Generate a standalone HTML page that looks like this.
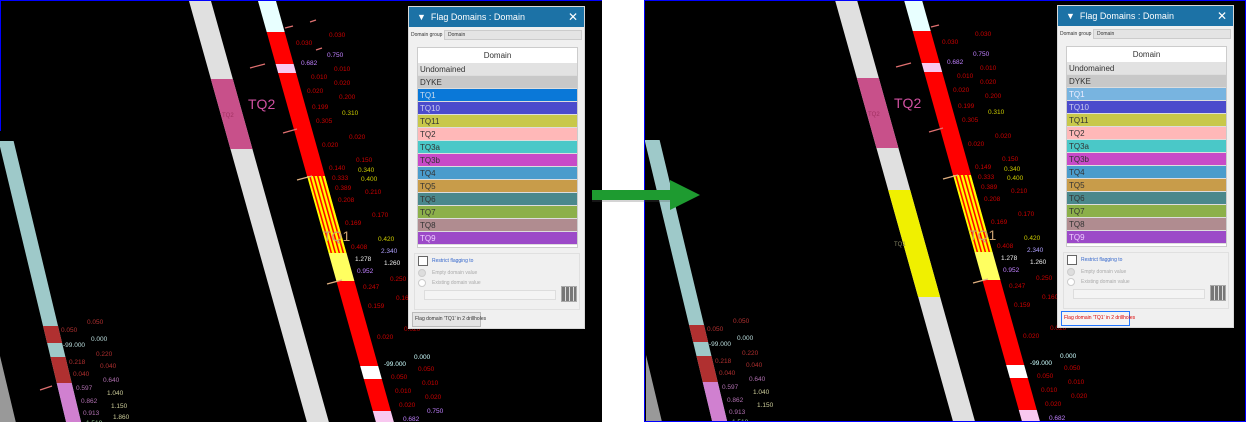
<!DOCTYPE html>
<html><head><meta charset="utf-8"><style>
*{margin:0;padding:0;box-sizing:border-box}
body{width:1246px;height:422px;background:#fff;position:relative;overflow:hidden;font-family:"Liberation Sans",sans-serif}
.panel{position:absolute;top:0;height:422px;background:#000;overflow:hidden}
.dlg{position:absolute;top:5px;width:177px;height:323px;background:#f0f0f0;border:1px solid #d8d8d8;font-size:6px;color:#333}
.tb{height:20px;background:#1c72a6;color:#fff;font-size:9px;line-height:20px;padding-left:8px;position:relative}
.tb .x{position:absolute;right:6px;top:0;font-size:12px}
.dg{position:absolute;top:23px;left:2px;right:2px;height:10px;font-size:5px;line-height:10px}
.dg span.sel{position:absolute;left:33px;right:0;top:0;height:10px;background:#e4e4e4;border:1px solid #ccc;padding-left:3px;line-height:8px}
.tbl{position:absolute;left:8px;top:40px;width:161px;height:201px;background:#fff;border:1px solid #ccc}
.tbl .h{height:15px;text-align:center;font-size:8px;line-height:15px;color:#333}
.tbl .r{height:13px;font-size:8px;line-height:13px;padding-left:2px;border-bottom:1px solid #ddd}
.grp{position:absolute;left:5px;top:246px;width:166px;height:57px;border:1px solid #e0e0e0}
.cb{position:absolute;left:3px;top:2px;width:10px;height:10px;border:1px solid #666;background:#fff}
.rd{position:absolute;left:3px;width:8px;height:8px;border-radius:50%;border:1px solid #ccc;background:#fff}
.fld{position:absolute;left:9px;top:36px;width:132px;height:10px;border:1px solid #ddd;background:#f4f4f4}
.gi{position:absolute;left:146px;top:32px;width:16px;height:16px;border:1px solid #aaa;background:repeating-linear-gradient(90deg,#777 0 3px,#ddd 3px 4px)}
.btn{position:absolute;left:3px;top:305px;width:69px;height:15px;border:1px solid #bbb;background:#e4e4e4;font-size:5px;line-height:13px;padding-left:2px;white-space:nowrap}
svg text{font-family:"Liberation Sans",sans-serif}
</style></head><body>

<!-- LEFT PANEL -->
<div class="panel" style="left:0;width:602px;border-top:1px solid #00f">
<svg width="602" height="422" style="position:absolute;left:0;top:0">
<defs><pattern id="hp" width="4" height="4" patternUnits="userSpaceOnUse"><rect width="4" height="4" fill="#ff0"/><rect width="1.6" height="4" fill="#f00"/></pattern></defs>
<polygon points="0,355 0,422 16,422" fill="#999"/>
<rect x="0" y="0" width="1" height="130" fill="#00f"/>
<g transform="skewX(13.5)">
<rect x="-35" y="140" width="15" height="282" fill="#9ec9c9"/>
<rect x="-35" y="325" width="15" height="17" fill="#b03030"/>
<rect x="-35" y="356" width="15" height="26" fill="#b03030"/>
<rect x="-35" y="382" width="15" height="40" fill="#d080d0"/>
</g>
<g transform="skewX(15.64)">
<rect x="189" y="0" width="22" height="422" fill="#e0e0e0"/>
<rect x="189" y="78" width="22" height="70" fill="#c8508a"/>
<rect x="258" y="0" width="18" height="31" fill="#e8ffff"/>
<rect x="258" y="31" width="18" height="32" fill="#f00"/>
<rect x="258" y="63" width="18" height="9" fill="#f8c8f0"/>
<rect x="258" y="72" width="18" height="103" fill="#f00"/>
<rect x="258" y="175" width="18" height="77" fill="url(#hp)"/>
<rect x="258" y="252" width="18" height="28" fill="#ffff60"/>
<rect x="258" y="280" width="18" height="85" fill="#f00"/>
<rect x="258" y="365" width="18" height="13" fill="#fff"/>
<rect x="258" y="378" width="18" height="32" fill="#f00"/>
<rect x="258" y="410" width="18" height="12" fill="#f8c8f0"/>
</g>
<g font-size="6.5" fill="#c00">
<text x="222" y="116" fill="#a03060" font-size="6">TQ2</text>
<text x="248" y="108" fill="#d050a0" font-size="14">TQ2</text>
<text x="323" y="240" fill="#c8a070" font-size="14">TQ1</text>
<g transform="translate(6,0)">
<text x="290" y="44">0.030</text><text x="323" y="36">0.030</text>
<text x="295" y="64" fill="#c080ff">0.682</text><text x="321" y="56" fill="#c080ff">0.750</text>
<text x="305" y="78">0.010</text><text x="328" y="70">0.010</text>
<text x="301" y="92">0.020</text><text x="328" y="84">0.020</text>
<text x="306" y="108">0.199</text><text x="333" y="98">0.200</text>
<text x="310" y="122">0.305</text><text x="336" y="114" fill="#cc0">0.310</text>
<text x="316" y="146">0.020</text><text x="343" y="138">0.020</text>
<text x="323" y="169">0.140</text><text x="350" y="161">0.150</text>
<text x="326" y="179">0.333</text><text x="352" y="171" fill="#cc0">0.340</text>
<text x="329" y="189">0.389</text><text x="355" y="180" fill="#cc0">0.400</text>
<text x="332" y="201">0.208</text><text x="359" y="193">0.210</text>
<text x="339" y="224">0.169</text><text x="366" y="216">0.170</text>
<text x="345" y="248">0.408</text><text x="372" y="240" fill="#cc0">0.420</text>
<text x="349" y="260" fill="#eee">1.278</text><text x="375" y="252" fill="#b0a0ff">2.340</text>
<text x="351" y="272" fill="#c080ff">0.952</text><text x="378" y="264" fill="#eee">1.260</text>
<text x="357" y="288">0.247</text><text x="384" y="280">0.250</text>
<text x="362" y="307">0.159</text><text x="390" y="299">0.160</text>
<text x="371" y="338">0.020</text><text x="398" y="330">0.020</text>
<text x="378" y="365" fill="#cff">-99.000</text><text x="408" y="358" fill="#cff">0.000</text>
<text x="385" y="378">0.050</text><text x="412" y="370">0.050</text>
<text x="389" y="392">0.010</text><text x="416" y="384">0.010</text>
<text x="393" y="406">0.020</text><text x="419" y="398">0.020</text>
<text x="397" y="420" fill="#c080ff">0.682</text><text x="421" y="412" fill="#c080ff">0.750</text>
</g>
<g fill="#b03030" transform="translate(3,0)">
<text x="58" y="331">0.050</text><text x="84" y="323">0.050</text>
<text x="60" y="346" fill="#bdd">-99.000</text><text x="88" y="340" fill="#bdd">0.000</text>
<text x="66" y="363">0.218</text><text x="93" y="355">0.220</text>
<text x="70" y="375">0.040</text><text x="97" y="367">0.040</text>
<text x="73" y="389" fill="#b070b0">0.597</text><text x="100" y="381" fill="#b070b0">0.640</text>
<text x="78" y="402" fill="#b070b0">0.862</text><text x="104" y="394" fill="#cc9">1.040</text>
<text x="80" y="414" fill="#b070b0">0.913</text><text x="108" y="407" fill="#cc9">1.150</text>
<text x="83" y="424" fill="#9c9">1.518</text><text x="110" y="418" fill="#cc9">1.860</text>
</g>
</g>
<g stroke="#e07070" stroke-width="1.2">
<line x1="285" y1="27" x2="293" y2="25"/><line x1="310" y1="21" x2="316" y2="19"/>
<line x1="250" y1="67" x2="265" y2="63"/><line x1="316" y1="49" x2="322" y2="47"/>
<line x1="283" y1="132" x2="297" y2="128"/>
<line x1="297" y1="179" x2="312" y2="175" stroke="#e0b080"/>
<line x1="327" y1="283" x2="342" y2="279" stroke="#e0b080"/>
<line x1="40" y1="389" x2="52" y2="385"/>
</g>
</svg>
<div class="dlg" style="left:408px">
<div class="tb">▼&nbsp; Flag Domains : Domain<span class="x">✕</span></div>
<div class="dg">Domain group<span class="sel">Domain</span></div>
<div class="tbl">
<div class="h">Domain</div>
<div class="r" style="background:#e2e2e2">Undomained</div>
<div class="r" style="background:#c8c8c8">DYKE</div>
<div class="r" style="background:#0a78d8;color:#cde">TQ1</div>
<div class="r" style="background:#4b4bcc;color:#cce">TQ10</div>
<div class="r" style="background:#c8c84a">TQ11</div>
<div class="r" style="background:#ffb8b8">TQ2</div>
<div class="r" style="background:#4ac8c8">TQ3a</div>
<div class="r" style="background:#c84ac8">TQ3b</div>
<div class="r" style="background:#4a9ccc">TQ4</div>
<div class="r" style="background:#c89c4a">TQ5</div>
<div class="r" style="background:#4a888c">TQ6</div>
<div class="r" style="background:#8cb04a">TQ7</div>
<div class="r" style="background:#b08c90">TQ8</div>
<div class="r" style="background:#9c4ac8;color:#ecf">TQ9</div>
</div>
<div class="grp"><div class="cb"></div><span style="position:absolute;left:17px;top:4px;color:#36c;font-size:5px">Restrict flagging to</span>
<div class="rd" style="top:15px;background:#ddd"></div><span style="position:absolute;left:17px;top:16px;color:#aaa;font-size:5px">Empty domain value</span>
<div class="rd" style="top:25px"></div><span style="position:absolute;left:17px;top:26px;color:#aaa;font-size:5px">Existing domain value</span>
<div class="fld"></div><div class="gi"></div></div>
<div class="btn">Flag domain 'TQ1' in 2 drillholes</div>
</div>
</div>

<!-- RIGHT PANEL -->
<div class="panel" style="left:644px;width:602px;border:1px solid #00f">
<svg width="602" height="422" style="position:absolute;left:-645px;top:-1px;overflow:visible">
<defs><pattern id="hp2" width="4" height="4" patternUnits="userSpaceOnUse"><rect width="4" height="4" fill="#ff0"/><rect width="1.6" height="4" fill="#f00"/></pattern></defs>
<g transform="translate(646,0)">
<polygon points="0,355 0,422 16,422" fill="#999"/>
<g transform="skewX(13.5)">
<rect x="-35" y="140" width="15" height="282" fill="#9ec9c9"/>
<rect x="-35" y="325" width="15" height="17" fill="#b03030"/>
<rect x="-35" y="356" width="15" height="26" fill="#b03030"/>
<rect x="-35" y="382" width="15" height="40" fill="#d080d0"/>
</g>
<g transform="skewX(15.64)">
<rect x="189" y="0" width="22" height="422" fill="#e0e0e0"/>
<rect x="189" y="78" width="22" height="70" fill="#c8508a"/>
<rect x="189" y="190" width="22" height="107" fill="#f0f000"/>
<rect x="258" y="0" width="18" height="31" fill="#e8ffff"/>
<rect x="258" y="31" width="18" height="32" fill="#f00"/>
<rect x="258" y="63" width="18" height="9" fill="#f8c8f0"/>
<rect x="258" y="72" width="18" height="103" fill="#f00"/>
<rect x="258" y="175" width="18" height="77" fill="url(#hp2)"/>
<rect x="258" y="252" width="18" height="28" fill="#ffff60"/>
<rect x="258" y="280" width="18" height="85" fill="#f00"/>
<rect x="258" y="365" width="18" height="13" fill="#fff"/>
<rect x="258" y="378" width="18" height="32" fill="#f00"/>
<rect x="258" y="410" width="18" height="12" fill="#f8c8f0"/>
</g>
<g font-size="6.5" fill="#c00">
<text x="222" y="116" fill="#a03060" font-size="6">TQ2</text>
<text x="248" y="108" fill="#d050a0" font-size="14">TQ2</text>
<text x="248" y="246" fill="#886" font-size="6">TQ1</text>
<text x="323" y="240" fill="#c8a070" font-size="14">TQ1</text>
<g transform="translate(6,0)">
<text x="290" y="44">0.030</text><text x="323" y="36">0.030</text>
<text x="295" y="64" fill="#c080ff">0.682</text><text x="321" y="56" fill="#c080ff">0.750</text>
<text x="305" y="78">0.010</text><text x="328" y="70">0.010</text>
<text x="301" y="92">0.020</text><text x="328" y="84">0.020</text>
<text x="306" y="108">0.199</text><text x="333" y="98">0.200</text>
<text x="310" y="122">0.305</text><text x="336" y="114" fill="#cc0">0.310</text>
<text x="316" y="146">0.020</text><text x="343" y="138">0.020</text>
<text x="323" y="169">0.149</text><text x="350" y="161">0.150</text>
<text x="326" y="179">0.333</text><text x="352" y="171" fill="#cc0">0.340</text>
<text x="329" y="189">0.389</text><text x="355" y="180" fill="#cc0">0.400</text>
<text x="332" y="201">0.208</text><text x="359" y="193">0.210</text>
<text x="339" y="224">0.169</text><text x="366" y="216">0.170</text>
<text x="345" y="248">0.408</text><text x="372" y="240" fill="#cc0">0.420</text>
<text x="349" y="260" fill="#eee">1.278</text><text x="375" y="252" fill="#b0a0ff">2.340</text>
<text x="351" y="272" fill="#c080ff">0.952</text><text x="378" y="264" fill="#eee">1.260</text>
<text x="357" y="288">0.247</text><text x="384" y="280">0.250</text>
<text x="362" y="307">0.159</text><text x="390" y="299">0.160</text>
<text x="371" y="338">0.020</text><text x="398" y="330">0.020</text>
<text x="378" y="365" fill="#cff">-99.000</text><text x="408" y="358" fill="#cff">0.000</text>
<text x="385" y="378">0.050</text><text x="412" y="370">0.050</text>
<text x="389" y="392">0.010</text><text x="416" y="384">0.010</text>
<text x="393" y="406">0.020</text><text x="419" y="398">0.020</text>
<text x="397" y="420" fill="#c080ff">0.682</text>
</g>
<g fill="#b03030" transform="translate(3,0)">
<text x="58" y="331">0.050</text><text x="84" y="323">0.050</text>
<text x="60" y="346" fill="#bdd">-99.000</text><text x="88" y="340" fill="#bdd">0.000</text>
<text x="66" y="363">0.218</text><text x="93" y="355">0.220</text>
<text x="70" y="375">0.040</text><text x="97" y="367">0.040</text>
<text x="73" y="389" fill="#b070b0">0.597</text><text x="100" y="381" fill="#b070b0">0.640</text>
<text x="78" y="402" fill="#b070b0">0.862</text><text x="104" y="394" fill="#cc9">1.040</text>
<text x="80" y="414" fill="#b070b0">0.913</text><text x="108" y="407" fill="#cc9">1.150</text>
<text x="83" y="424" fill="#9c9">1.518</text>
</g>
</g>
<g stroke="#e07070" stroke-width="1.2">
<line x1="285" y1="27" x2="293" y2="25"/><line x1="250" y1="67" x2="265" y2="63"/>
<line x1="283" y1="132" x2="297" y2="128"/>
<line x1="297" y1="179" x2="312" y2="175" stroke="#e0b080"/>
<line x1="327" y1="283" x2="342" y2="279" stroke="#e0b080"/>
</g>
</g>
</svg>
<div class="dlg" style="left:412px;top:4px">
<div class="tb">▼&nbsp; Flag Domains : Domain<span class="x">✕</span></div>
<div class="dg">Domain group<span class="sel">Domain</span></div>
<div class="tbl">
<div class="h">Domain</div>
<div class="r" style="background:#e2e2e2">Undomained</div>
<div class="r" style="background:#c8c8c8">DYKE</div>
<div class="r" style="background:#78b4e0;color:#eef">TQ1</div>
<div class="r" style="background:#4b4bcc;color:#cce">TQ10</div>
<div class="r" style="background:#c8c84a">TQ11</div>
<div class="r" style="background:#ffb8b8">TQ2</div>
<div class="r" style="background:#4ac8c8">TQ3a</div>
<div class="r" style="background:#c84ac8">TQ3b</div>
<div class="r" style="background:#4a9ccc">TQ4</div>
<div class="r" style="background:#c89c4a">TQ5</div>
<div class="r" style="background:#4a888c">TQ6</div>
<div class="r" style="background:#8cb04a">TQ7</div>
<div class="r" style="background:#b08c90">TQ8</div>
<div class="r" style="background:#9c4ac8;color:#ecf">TQ9</div>
</div>
<div class="grp"><div class="cb"></div><span style="position:absolute;left:17px;top:4px;color:#36c;font-size:5px">Restrict flagging to</span>
<div class="rd" style="top:15px;background:#ddd"></div><span style="position:absolute;left:17px;top:16px;color:#aaa;font-size:5px">Empty domain value</span>
<div class="rd" style="top:25px"></div><span style="position:absolute;left:17px;top:26px;color:#aaa;font-size:5px">Existing domain value</span>
<div class="fld"></div><div class="gi"></div></div>
<div class="btn" style="border-color:#27f;color:#d00;background:#f4f4f4">Flag domain 'TQ1' in 2 drillholes</div>
</div>
</div>

<!-- ARROW (on top) -->
<svg width="120" height="40" style="position:absolute;left:590px;top:178px;z-index:10">
<rect x="2" y="14" width="82" height="10" fill="#555" opacity=".25"/>
<rect x="2" y="12" width="80" height="10" fill="#1e9b30"/>
<polygon points="80,2 110,17 80,32" fill="#1e9b30"/>
</svg>
</body></html>
